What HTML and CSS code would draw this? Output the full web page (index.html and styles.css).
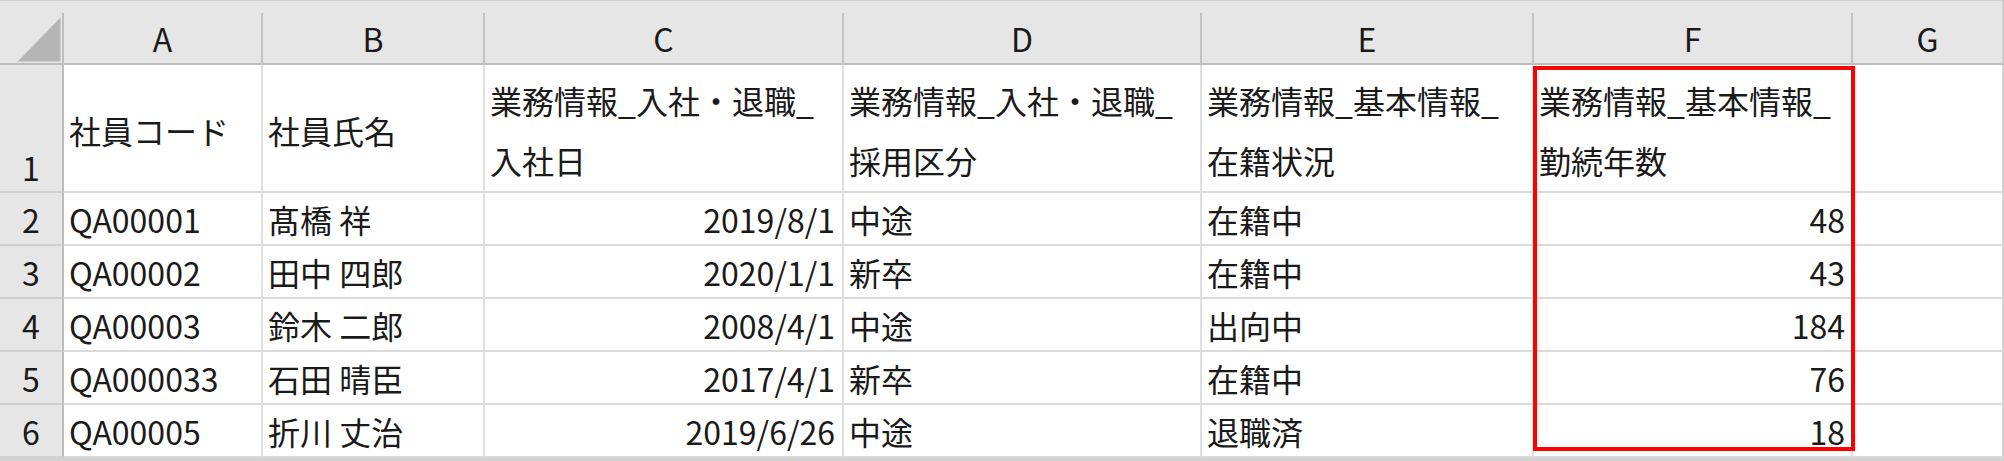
FILE: index.html
```html
<!DOCTYPE html>
<html lang="ja">
<head>
<meta charset="utf-8">
<title>sheet</title>
<link rel="stylesheet" href="styles.css">
</head>
<body>
<div class="sheet">
  <div class="band"></div>

  <div class="corner"><svg class="tri" width="44" height="45" viewBox="0 0 44 45"><polygon points="0.5,44.5 43.5,0.5 43.5,44.5" fill="#b5b5b5" stroke="#d0d0d0" stroke-width="1"/></svg></div>
  <div class="colhead">A</div>
  <div class="colhead">B</div>
  <div class="colhead">C</div>
  <div class="colhead">D</div>
  <div class="colhead">E</div>
  <div class="colhead">F</div>
  <div class="colhead last">G</div>

  <div class="rowhead r1">1</div>
  <div class="cell title">社員コード</div>
  <div class="cell title">社員氏名</div>
  <div class="cell title">業務情報_入社・退職_<br>入社日</div>
  <div class="cell title">業務情報_入社・退職_<br>採用区分</div>
  <div class="cell title">業務情報_基本情報_<br>在籍状況</div>
  <div class="cell title">業務情報_基本情報_<br>勤続年数</div>
  <div class="cell last"></div>

  <div class="rowhead">2</div>
  <div class="cell">QA00001</div>
  <div class="cell">髙橋 祥</div>
  <div class="cell num">2019/8/1</div>
  <div class="cell">中途</div>
  <div class="cell">在籍中</div>
  <div class="cell num f">48</div>
  <div class="cell last"></div>

  <div class="rowhead">3</div>
  <div class="cell">QA00002</div>
  <div class="cell">田中 四郎</div>
  <div class="cell num">2020/1/1</div>
  <div class="cell">新卒</div>
  <div class="cell">在籍中</div>
  <div class="cell num f">43</div>
  <div class="cell last"></div>

  <div class="rowhead">4</div>
  <div class="cell">QA00003</div>
  <div class="cell">鈴木 二郎</div>
  <div class="cell num">2008/4/1</div>
  <div class="cell">中途</div>
  <div class="cell">出向中</div>
  <div class="cell num f">184</div>
  <div class="cell last"></div>

  <div class="rowhead">5</div>
  <div class="cell">QA000033</div>
  <div class="cell">石田 晴臣</div>
  <div class="cell num">2017/4/1</div>
  <div class="cell">新卒</div>
  <div class="cell">在籍中</div>
  <div class="cell num f">76</div>
  <div class="cell last"></div>

  <div class="rowhead">6</div>
  <div class="cell">QA00005</div>
  <div class="cell">折川 丈治</div>
  <div class="cell num">2019/6/26</div>
  <div class="cell">中途</div>
  <div class="cell">退職済</div>
  <div class="cell num f">18</div>
  <div class="cell last"></div>
</div>
<div class="highlight"></div>
</body>
</html>
```

FILE: styles.css
```css
* { box-sizing: border-box; }

html, body {
  margin: 0;
  padding: 0;
  background: #ffffff;
}

body {
  width: 2004px;
  height: 461px;
  overflow: hidden;
  font-family: "Noto Sans CJK JP", "Noto Sans", sans-serif;
  font-size: 32px;
  color: #1a1a1a;
}

.sheet {
  display: grid;
  grid-template-columns: 64px 199px 222px 359px 358px 332px 319px 151px;
  grid-template-rows: 13px 52px 128px repeat(5, 53px);
  width: 2004px;
  border-bottom: 3px solid #d2d2d2;
}

.band {
  grid-column: 1 / -1;
  background: #e6e6e6;
  border-top: 1px solid #d0d0d0;
  border-right: 2px solid #d0d0d0;
}

.corner {
  background: #e6e6e6;
  border-right: 2px solid #bfbfbf;
  border-bottom: 2px solid #bdbdbd;
  padding: 4px 0 0 17px;
}

.tri { display: block; }

.colhead {
  background: #e6e6e6;
  border-right: 2px solid #c3c3c3;
  border-bottom: 2px solid #bdbdbd;
  display: flex;
  align-items: center;
  justify-content: center;
  line-height: 40px;
}

.colhead.last { border-right-color: #d0d0d0; }

.rowhead {
  background: #e6e6e6;
  border-right: 2px solid #bdbdbd;
  border-bottom: 2px solid #d0d0d0;
  display: flex;
  align-items: center;
  justify-content: center;
  line-height: 40px;
}

.rowhead.r1 {
  align-items: flex-end;
  padding-bottom: 4px;
}

.cell {
  border-right: 2px solid #e0e0e0;
  border-bottom: 2px solid #dadada;
  display: flex;
  align-items: center;
  padding: 0 5px;
  line-height: 40px;
  white-space: nowrap;
}

.cell.title {
  display: block;
  padding-top: 3px;
  line-height: 60px;
  align-self: stretch;
}

.sheet .cell.title {
  display: flex;
  flex-direction: column;
  justify-content: center;
  align-items: flex-start;
}

.cell.num {
  justify-content: flex-end;
  padding-right: 7px;
}

.cell.num.f { padding-right: 6px; }

.cell.last { border-right: 2px solid #d2d2d2; }

.highlight {
  position: absolute;
  left: 1533px;
  top: 66px;
  width: 322px;
  height: 385px;
  border: 4px solid #ff0000;
}
```
